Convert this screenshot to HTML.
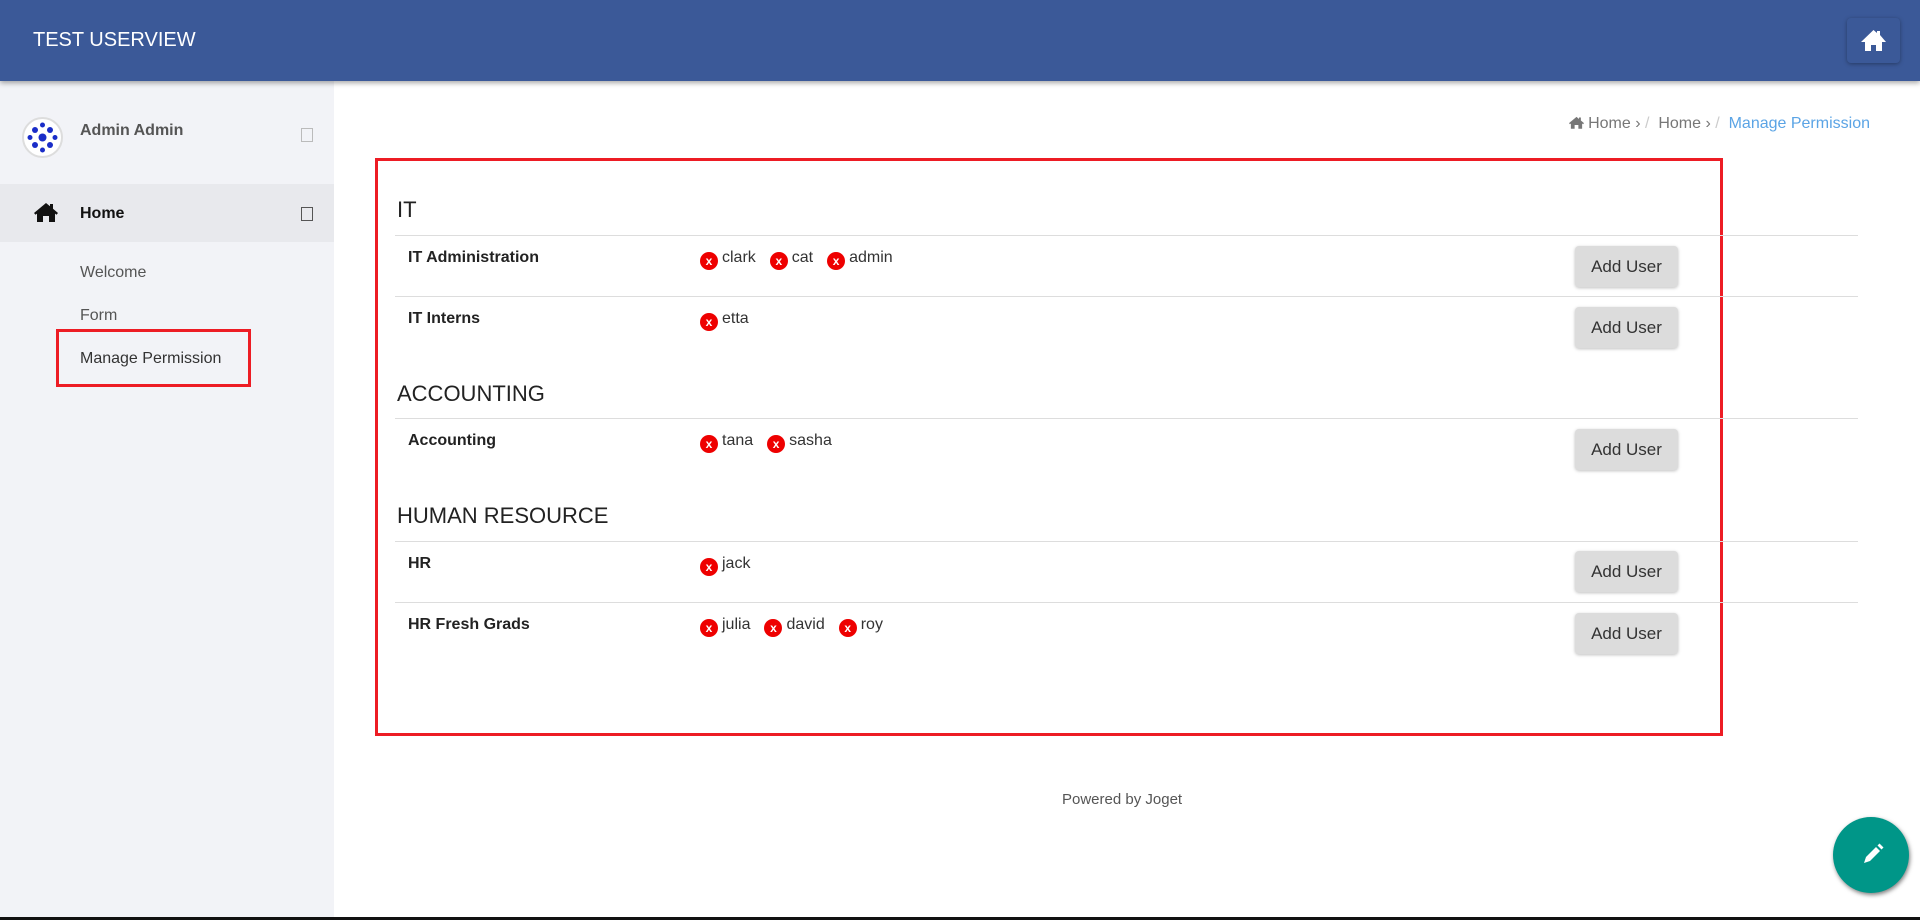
<!DOCTYPE html>
<html><head><meta charset="utf-8"><style>
*{box-sizing:border-box;margin:0;padding:0}
body{width:1920px;height:920px;overflow:hidden;background:#fff;font-family:"Liberation Sans",Arial,sans-serif;position:relative;color:#333}
.hdr{position:absolute;left:0;top:0;width:1920px;height:81px;background:#3b5998;box-shadow:0 2px 5px rgba(0,0,0,.35);z-index:2}
.hdr .t{position:absolute;left:33px;top:29px;color:#fff;font-size:20px}
.hb{position:absolute;left:1847px;top:18px;width:53px;height:45px;border-radius:4px;background:#3b5998;box-shadow:0 1px 4px rgba(0,0,0,.35)}
.side{position:absolute;left:0;top:81px;width:334px;height:839px;background:#f2f3f7}
.av{position:absolute;left:22px;top:117px;width:41px;height:41px;border-radius:50%;background:#fff;border:2px solid #ddd}
.nm{position:absolute;left:80px;top:122px;font-weight:bold;font-size:16px;color:#555}
.cb{position:absolute;width:12px;height:14px;border:1px solid #999}
.homerow{position:absolute;left:0;top:184px;width:334px;height:58px;background:#e8e9ed}
.sl{position:absolute;left:80px;font-size:16px;color:#555}
.red{position:absolute;border:3px solid #ed1c24}
.bc{position:absolute;right:50px;top:115px;font-size:16px;color:#777}
h3{position:absolute;left:397px;font-size:22px;font-weight:normal;color:#222}
.ln{position:absolute;left:395px;width:1463px;height:1px;background:#ddd}
.rn{position:absolute;left:408px;font-weight:bold;font-size:16px;color:#222}
.us{position:absolute;left:700px;font-size:16px;color:#333}
.us span{margin-right:14px}
.x{display:inline-block;width:18px;height:18px;border-radius:50%;background:#e00;color:#fff;font-size:12px;font-weight:bold;font-style:normal;text-align:center;line-height:18px;vertical-align:-3px;margin-right:4px}
.btn{position:absolute;left:1575px;width:103px;height:41px;background:#dcdcdc;border-radius:4px;box-shadow:0 1px 3px rgba(0,0,0,.25);font-size:17px;color:#333;text-align:center;line-height:41px}
.pw{position:absolute;left:1062px;top:791px;font-size:15px;color:#555}
.fab{position:absolute;left:1833px;top:817px;width:76px;height:76px;border-radius:50%;background:#009688;box-shadow:1px 2px 4px rgba(0,0,0,.5)}
</style></head><body>
<div class="hdr"><div class="t">TEST USERVIEW</div>
<div class="hb"><svg width="53" height="45" viewBox="0 0 53 45"><path d="M26.5 12 L14 24 h4 v9 h6 v-6 h5 v6 h6 v-9 h4 L33 17 V13 h-3 v2 z" fill="#fff"/></svg></div></div>
<div class="side"></div>
<div class="av"><svg width="37" height="37" viewBox="0 0 37 37"><g fill="#1a2dc8"><circle cx="18.5" cy="18.5" r="4"/><circle cx="11" cy="11" r="3"/><circle cx="26" cy="11" r="3"/><circle cx="11" cy="26" r="3"/><circle cx="26" cy="26" r="3"/><circle cx="18.5" cy="6" r="2.5"/><circle cx="18.5" cy="31" r="2.5"/><circle cx="6" cy="18.5" r="2.5"/><circle cx="31" cy="18.5" r="2.5"/></g></svg></div>
<div class="nm">Admin Admin</div>
<div class="cb" style="left:301px;top:128px;border-color:#bbb"></div>
<div class="homerow"></div>
<svg style="position:absolute;left:34px;top:202px" width="24" height="20" viewBox="0 0 24 20"><path d="M12 1 L0 11 l1.5 1.8 L3 11.6 V20 h6 v-6 h6 v6 h6 v-8.4 l1.5 1.2 L24 11 L19 6.8 V2 h-3 v2.3z" fill="#111"/></svg>
<div class="nm" style="top:205px;color:#111">Home</div>
<div class="cb" style="left:301px;top:207px;border-color:#555"></div>
<div class="sl" style="top:264px">Welcome</div>
<div class="sl" style="top:307px">Form</div>
<div class="sl" style="top:350px;color:#333">Manage Permission</div>
<div class="red" style="left:56px;top:329px;width:195px;height:58px"></div>
<div class="bc"><svg width="15" height="13" viewBox="0 0 24 20" style="vertical-align:-1px"><path d="M12 1 L0 11 l1.5 1.8 L3 11.6 V20 h6 v-6 h6 v6 h6 v-8.4 l1.5 1.2 L24 11 L19 6.8 V2 h-3 v2.3z" fill="#777"/></svg> Home › <span style="color:#ccc">/</span>&nbsp; Home › <span style="color:#ccc">/</span>&nbsp; <span style="color:#5ba4e5">Manage Permission</span></div>
<div class="red" style="left:375px;top:158px;width:1348px;height:578px"></div>
<h3 style="top:197px">IT</h3>
<div class="ln" style="top:235px"></div>
<div class="rn" style="top:249px">IT Administration</div>
<div class="us" style="top:249px"><span><i class="x">x</i>clark</span><span><i class="x">x</i>cat</span><span><i class="x">x</i>admin</span></div>
<div class="btn" style="top:246px">Add User</div>
<div class="ln" style="top:296px"></div>
<div class="rn" style="top:310px">IT Interns</div>
<div class="us" style="top:310px"><span><i class="x">x</i>etta</span></div>
<div class="btn" style="top:307px">Add User</div>
<h3 style="top:381px">ACCOUNTING</h3>
<div class="ln" style="top:418px"></div>
<div class="rn" style="top:432px">Accounting</div>
<div class="us" style="top:432px"><span><i class="x">x</i>tana</span><span><i class="x">x</i>sasha</span></div>
<div class="btn" style="top:429px">Add User</div>
<h3 style="top:503px">HUMAN RESOURCE</h3>
<div class="ln" style="top:541px"></div>
<div class="rn" style="top:555px">HR</div>
<div class="us" style="top:555px"><span><i class="x">x</i>jack</span></div>
<div class="btn" style="top:551px">Add User</div>
<div class="ln" style="top:602px"></div>
<div class="rn" style="top:616px">HR Fresh Grads</div>
<div class="us" style="top:616px"><span><i class="x">x</i>julia</span><span><i class="x">x</i>david</span><span><i class="x">x</i>roy</span></div>
<div class="btn" style="top:613px">Add User</div>
<div class="pw">Powered by Joget</div>
<div class="fab"><svg width="76" height="76" viewBox="0 0 76 76"><path d="M43 30 l4 4 l-10 10 l-6 2 l2 -6 z" fill="#fff"/><path d="M44.5 28.5 l2 -2 l4 4 l-2 2z" fill="#fff"/></svg></div>
<div style="position:absolute;left:0;top:917px;width:1920px;height:3px;background:#111"></div>
</body></html>
